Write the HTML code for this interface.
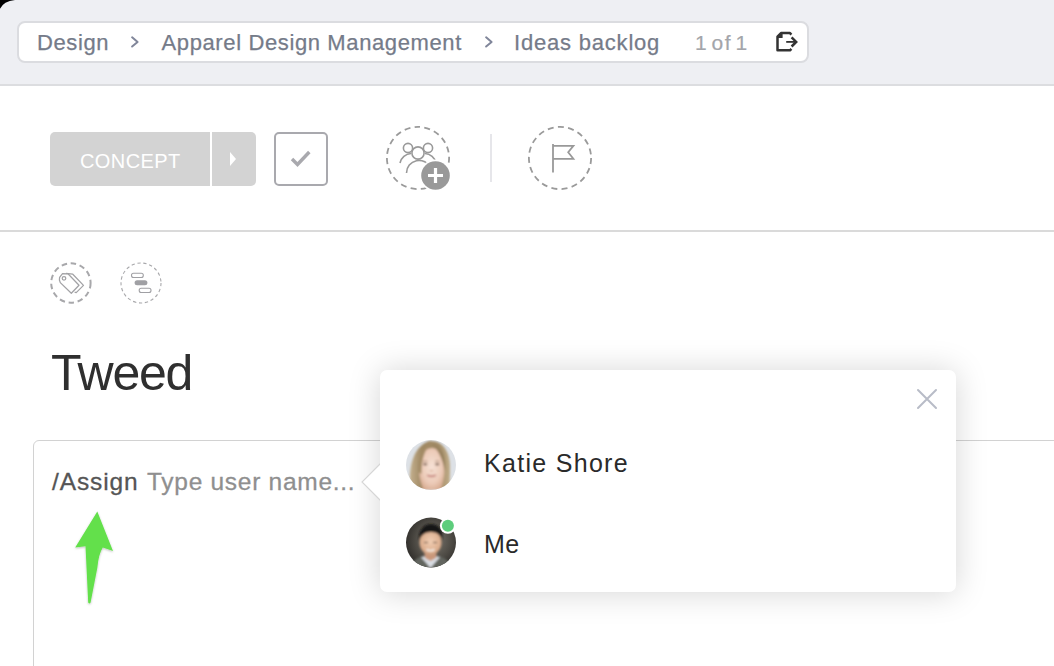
<!DOCTYPE html>
<html><head><meta charset="utf-8">
<style>
*{box-sizing:border-box;margin:0;padding:0}
html,body{width:1054px;height:666px;overflow:hidden;background:#fff;font-family:"Liberation Sans",sans-serif}
.abs{position:absolute}
#hdr{left:0;top:0;width:1054px;height:86px;background:#eeeff3;border-bottom:2px solid #dcdde0}
#crumb{left:17px;top:21px;width:792px;height:42px;background:#fff;border:2px solid #dbdce0;border-radius:8px}
.ct{position:absolute;top:29px;font-size:22px;color:#757b89;white-space:nowrap;line-height:28px;-webkit-text-stroke:0.25px #757b89}
.chev{position:absolute;top:37px}
#corner{left:0;top:0}
#btn{left:50px;top:132px;width:206px;height:54px;background:#d3d3d3;border-radius:5px}
#btnsep{left:210px;top:132px;width:2px;height:54px;background:#fff}
#btntxt{left:80px;top:149px;font-size:20px;color:#fff;letter-spacing:0.4px;line-height:24px;white-space:nowrap}
#chk{left:274px;top:132px;width:54px;height:54px;border:2px solid #a9a9ae;border-radius:5px}
#line2{left:0;top:230px;width:1054px;height:1.5px;background:#dadada}
#title{left:51px;top:343px;font-size:50px;color:#2f2f2f;letter-spacing:-1.25px;line-height:60px;white-space:nowrap}
#editor{left:33px;top:440px;width:1100px;height:300px;border:1.8px solid #d2d2d2;border-radius:6px}
#assign{left:52px;top:466.6px;font-size:24.5px;letter-spacing:0.9px;line-height:30px;white-space:nowrap;color:#555;-webkit-text-stroke:0.3px #555}
#ph{left:147px;letter-spacing:0.72px;top:466.6px;font-size:24.5px;line-height:30px;white-space:nowrap;color:#8f8f8f;-webkit-text-stroke:0.3px #8f8f8f}
#pop{left:380px;top:370px;width:576px;height:222px;background:#fff;border-radius:7px;box-shadow:0 1px 32px rgba(0,0,0,0.17)}
.name{position:absolute;font-size:25px;color:#2a2a2a;line-height:30px;white-space:nowrap}
</style></head>
<body>
<div id="hdr" class="abs"></div>
<svg id="corner" class="abs" width="20" height="14"><path d="M0,0 H15 Q3.5,1.2 0,8.8 Z" fill="#000"/></svg>
<div id="crumb" class="abs"></div>
<div class="ct" style="left:37px;letter-spacing:0.6px">Design</div>
<svg class="abs" style="left:125px;top:32px" width="20" height="22" viewBox="125 32 20 22"><path d="M132.1,37.3 L137.6,41.9 L132.1,46.5" fill="none" stroke="#80869a" stroke-width="2" stroke-linecap="round" stroke-linejoin="round"/></svg>
<div class="ct" style="left:161.5px;letter-spacing:0.62px">Apparel Design Management</div>
<svg class="abs" style="left:478px;top:32px" width="20" height="22" viewBox="478 32 20 22"><path d="M486.1,37.3 L491.6,41.9 L486.1,46.5" fill="none" stroke="#80869a" stroke-width="2" stroke-linecap="round" stroke-linejoin="round"/></svg>
<div class="ct" style="left:514px;letter-spacing:0.8px">Ideas backlog</div>
<div class="ct" style="left:695px;color:#a3a5aa;font-size:21px;-webkit-text-stroke:0.2px #a3a5aa">1</div><div class="ct" style="left:711.5px;letter-spacing:1.6px;color:#a3a5aa;font-size:21px;-webkit-text-stroke:0.2px #a3a5aa">of</div><div class="ct" style="left:735.5px;color:#a3a5aa;font-size:21px;-webkit-text-stroke:0.2px #a3a5aa">1</div>
<svg class="abs" style="left:772px;top:28px" width="30" height="28" viewBox="772 28 30 28">
 <path d="M791.4,34.6 L790,33.1 H781 L777.5,36.6 V50.3 H790 L791.4,48.9" fill="none" stroke="#333" stroke-width="2.5" stroke-linejoin="round"/>
 <path d="M777.5,36.6 L781,33.1 H782.6 V37.9 H777.5 Z" fill="#333"/>
 <path d="M791.6,37.3 L796.2,41.9 L791.6,46.5" fill="none" stroke="#333" stroke-width="2.5"/>
 <path d="M786.2,41.9 H795" stroke="#333" stroke-width="1.8"/>
</svg>

<div id="btn" class="abs"></div>
<div id="btnsep" class="abs"></div>
<div id="btntxt" class="abs">CONCEPT</div>
<svg class="abs" style="left:229px;top:151px" width="10" height="16"><path d="M1,1 L7,8 L1,15 Z" fill="#fff"/></svg>
<div id="chk" class="abs"></div>
<svg class="abs" style="left:288px;top:147px" width="26" height="22"><path d="M4,12 L9.5,17.5 L21.3,5" fill="none" stroke="#a9a9ae" stroke-width="3.4"/></svg>

<!-- assignee -->
<svg class="abs" style="left:384px;top:124px" width="70" height="70" viewBox="0 0 70 70">
 <circle cx="34" cy="34" r="31.1" fill="none" stroke="#9a9a9a" stroke-width="1.8" stroke-dasharray="6 4.3" stroke-dashoffset="4" transform="rotate(-90 34 34)"/>
 <g fill="none" stroke="#999" stroke-width="1.6">
  <circle cx="24" cy="24" r="4.6"/>
  <circle cx="44" cy="24" r="4.6"/>
  <path d="M16,39 A12,12 0 0 1 27,29.5"/>
  <path d="M41,29.5 A12,12 0 0 1 52,39"/>
  <circle cx="34" cy="29" r="6.1" fill="#fff"/>
  <path d="M22.5,49 A12.5,12.5 0 0 1 46.5,44"/>
 </g>
 <circle cx="51.5" cy="51.5" r="16" fill="#fff"/>
 <circle cx="51.5" cy="51.5" r="14.3" fill="#999"/>
 <path d="M51.5,44 V59 M44,51.5 H59" stroke="#fff" stroke-width="3.2"/>
</svg>
<div class="abs" style="left:490px;top:134px;width:1.5px;height:48px;background:#e6e6ea"></div>
<svg class="abs" style="left:526px;top:124px" width="70" height="70" viewBox="0 0 70 70">
 <circle cx="34" cy="34" r="31.1" fill="none" stroke="#9a9a9a" stroke-width="1.8" stroke-dasharray="6 4.3"/>
 <path d="M27,20 V48.5 M27,21.8 H47.4 L42.2,28.2 L47.4,34.8 H27" fill="none" stroke="#999" stroke-width="1.8"/>
</svg>

<div id="line2" class="abs"></div>

<!-- tags -->
<svg class="abs" style="left:48px;top:260px" width="46" height="46" viewBox="48 260 46 46">
 <circle cx="70.9" cy="283" r="19.7" fill="none" stroke="#a8a8ab" stroke-width="2" stroke-dasharray="5.5 3.7"/>
 <g fill="none" stroke="#a2a2a5" stroke-width="1.25" stroke-linejoin="round">
  <path d="M60.3,282.6 L59.4,280 L59.6,277.3 L62.5,273.6 L68,273.8 L79,285.3 L71.3,293.3 Z"/>
  <path d="M66,273.4 L72.8,274.2 L83.5,285.4 L76.2,292.6 L74.6,292.2"/>
  <circle cx="64" cy="278.3" r="1.8"/>
 </g>
</svg>
<svg class="abs" style="left:119px;top:261px" width="44" height="44" viewBox="0 0 44 44">
 <circle cx="22" cy="22" r="20" fill="none" stroke="#a8a8ab" stroke-width="1.1" stroke-dasharray="3.3 2.7"/>
 <rect x="12.5" y="12.3" width="11.8" height="4.2" rx="2" fill="none" stroke="#a0a0a4" stroke-width="1.1"/>
 <rect x="15.6" y="19.3" width="12.8" height="5" rx="2.5" fill="#a0a0a4"/>
 <rect x="20.2" y="27.3" width="11.8" height="4.2" rx="2" fill="none" stroke="#a0a0a4" stroke-width="1.1"/>
</svg>

<div id="title" class="abs">Tweed</div>

<div id="editor" class="abs"></div>
<div id="assign" class="abs">/Assign</div><div id="ph" class="abs">Type user name...</div>

<!-- green arrow -->
<svg class="abs" style="left:70px;top:505px" width="50" height="105" viewBox="70 505 50 105">
 <defs><filter id="sh" x="-30%" y="-10%" width="160%" height="130%"><feDropShadow dx="0" dy="1" stdDeviation="0.8" flood-color="#000" flood-opacity="0.25"/></filter></defs>
 <path d="M97.3,511.6 L75.2,547.5 L85.5,546.3 L88.2,602.5 Q89.4,604.5 90.6,602.5 L97.3,568 Q98.6,554 102.8,547.5 L113,551 Z" fill="#64e04b" filter="url(#sh)"/>
</svg>

<!-- popup -->
<div id="pop" class="abs"></div>
<svg class="abs" style="left:355px;top:455px" width="30" height="54"><path d="M26.5,7.5 L7,27 L26.5,46.5" fill="#fff" stroke="#d6d6d6" stroke-width="1.1"/><rect x="25" y="0" width="5" height="54" fill="#fff"/></svg>
<svg class="abs" style="left:912px;top:384px" width="30" height="30"><path d="M6,6 L24,24 M24,6 L6,24" stroke="#b8bcc7" stroke-width="2" stroke-linecap="round"/></svg>

<svg class="abs" style="left:406px;top:440px" width="50" height="50" viewBox="0 0 50 50">
 <defs><clipPath id="c1"><circle cx="25" cy="25" r="25"/></clipPath>
 <filter id="bl1" x="-20%" y="-20%" width="140%" height="140%"><feGaussianBlur stdDeviation="0.8"/></filter>
 <radialGradient id="face1" cx="50%" cy="45%" r="60%"><stop offset="0" stop-color="#f6e1d5"/><stop offset="0.65" stop-color="#eccbb8"/><stop offset="1" stop-color="#d6a98f"/></radialGradient>
 <linearGradient id="hair1" x1="0" y1="0" x2="1" y2="0"><stop offset="0" stop-color="#c4b08e"/><stop offset="0.3" stop-color="#9e8762"/><stop offset="0.7" stop-color="#a48d68"/><stop offset="1" stop-color="#c2ae8a"/></linearGradient></defs>
 <g clip-path="url(#c1)">
  <rect width="50" height="50" fill="#dde1e6"/>
  <g filter="url(#bl1)">
  <path d="M4,50 C3,30 5,8 23,1 C38,0 45,14 44,30 C44,40 43,46 45,50 Z" fill="url(#hair1)"/>
  <path d="M17,50 C16,44 13.5,40 13,30 C12.5,18 17,8 26,8 C34,8 39,18 38.5,30 C38,40 36,44 35,50 Z" fill="url(#face1)"/>
  <path d="M12.5,32 C11,17 17,5 25,4 C19,9 15.5,18 15.5,34 Z" fill="#a48c66"/>
  <path d="M26,4 C35,5 41,14 39,32 C37,20 33,11 26,4 Z" fill="#9a8460"/>
  <ellipse cx="19.2" cy="24.3" rx="2.3" ry="1.1" fill="#7d6356"/>
  <ellipse cx="31.2" cy="24.3" rx="2.3" ry="1.1" fill="#7d6356"/>
  <path d="M17,21.5 Q19.2,20.5 21.5,21.5 M29,21.5 Q31.2,20.5 33.5,21.5" stroke="#a88a74" stroke-width="0.9" fill="none"/>
  <path d="M21,35.2 Q25.5,38.2 30,35.2 Q25.5,36.8 21,35.2 Z" fill="#c88880" stroke="#c88880" stroke-width="1.3"/>
  <path d="M23.8,30.5 Q25.5,31.3 27.2,30.5" stroke="#d3a48c" stroke-width="1" fill="none"/>
  </g>
 </g>
</svg>

<svg class="abs" style="left:406px;top:517px" width="60" height="52" viewBox="0 0 60 52">
 <defs><clipPath id="c2"><circle cx="25" cy="25.5" r="25"/></clipPath>
 <filter id="bl2" x="-20%" y="-20%" width="140%" height="140%"><feGaussianBlur stdDeviation="0.8"/></filter>
 <radialGradient id="bg2" cx="55%" cy="45%" r="60%"><stop offset="0" stop-color="#7a766e"/><stop offset="0.6" stop-color="#4e4b45"/><stop offset="1" stop-color="#2c2a27"/></radialGradient>
 <radialGradient id="face2" cx="50%" cy="45%" r="60%"><stop offset="0" stop-color="#f0cdb3"/><stop offset="0.75" stop-color="#dcae8e"/><stop offset="1" stop-color="#b88a6c"/></radialGradient></defs>
 <g clip-path="url(#c2)">
  <rect width="50" height="52" fill="url(#bg2)"/>
  <g filter="url(#bl2)">
  <path d="M3,52 C6,43 14,38 24,38 C35,38 43,42 47,52 Z" fill="#62655f"/>
  <path d="M15,40 L24.5,51 L34,40 C30,38.5 19,38.5 15,40 Z" fill="#d9dde3"/>
  <path d="M18,33 L19,41 L24.5,44 L30,41 L31,33 Z" fill="#c9977a"/>
  <ellipse cx="24.5" cy="25.5" rx="11" ry="12.5" fill="url(#face2)"/>
  <path d="M13,24 C12,13 18,7 25,7 C32,7 38,12 36,24 C35,18 31,15 25,15 C19,15 15,18 13,24 Z" fill="#161412"/>
  <path d="M18,25.5 h4 M27,25.5 h4" stroke="#4a362c" stroke-width="1.2"/>
  <path d="M20.5,32.5 Q24.5,35 28.5,32.5" stroke="#f5f0ea" stroke-width="1.6" fill="none"/>
  </g>
 </g>
 <circle cx="41.9" cy="8.8" r="8" fill="#fff"/>
 <circle cx="41.9" cy="8.8" r="6" fill="#5dcd7c"/>
</svg>

<div class="name" style="left:484px;top:448px;letter-spacing:1.3px">Katie Shore</div>
<div class="name" style="left:484px;top:528.6px;letter-spacing:0.4px">Me</div>
</body></html>
